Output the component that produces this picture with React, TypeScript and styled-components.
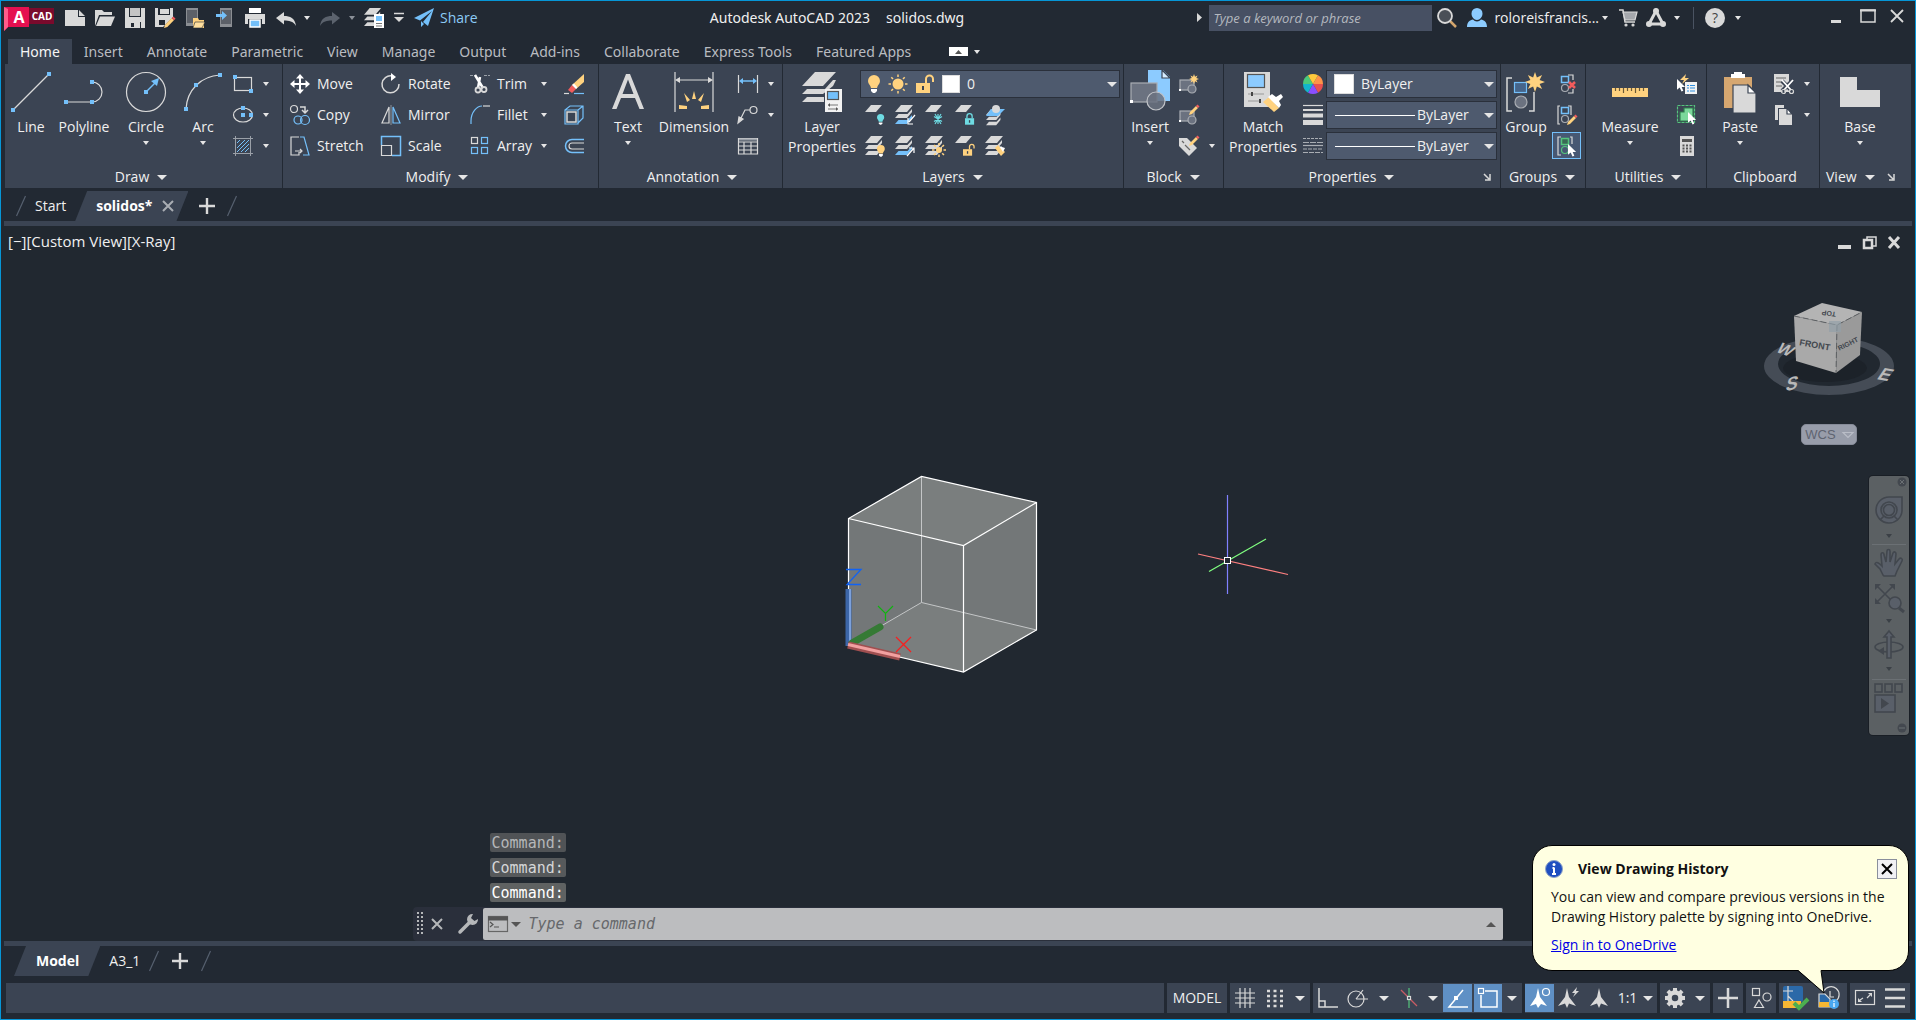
import React from 'react';
import styled, { createGlobalStyle, css } from 'styled-components';

const W = '#d9d9d9';
const B = '#74c0fa';
const Y = '#ffd27f';
const T = '#6edbe3';
const G = '#55c47c';
const R = '#f25c5c';
const PANEL = '#3b4453';
const CHROME = '#222933';

const Global = createGlobalStyle`
  * { box-sizing: border-box; }
  body { margin: 0; background: ${CHROME}; }
  button, input, select { font: inherit; color: inherit; }
`;

const Window = styled.div`
  position: relative;
  display: flex;
  flex-direction: column;
  min-height: 100vh;
  padding-bottom: 6px;
  border: 1px solid #0696d7;
  background: ${CHROME};
  color: #f0f0f0;
  font: 14px/20px 'Open Sans', 'Noto Sans', sans-serif;
  overflow: hidden;
`;

const Btn = styled.button<{ w?: number; h?: number; on?: boolean }>`
  display: flex;
  align-items: center;
  justify-content: center;
  flex: none;
  width: ${(p) => (p.w ? `${p.w}px` : 'auto')};
  height: ${(p) => (p.h ? `${p.h}px` : 'auto')};
  padding: 0;
  border: 0;
  background: ${(p) => (p.on ? '#5f90c5' : 'transparent')};
  cursor: pointer;
`;

const Svg = styled.svg`
  display: block;
  flex: none;
  overflow: visible;
`;

type IcoProps = { w?: number; h?: number; children: React.ReactNode };
const Ico = ({ w = 20, h = 20, children }: IcoProps) => (
  <Svg width={w} height={h} viewBox={`0 0 ${w} ${h}`} fill="none" stroke={W} strokeWidth={1.2} aria-hidden="true">
    {children}
  </Svg>
);

const Caret = ({ big, up, color = '#e6e6e6' }: { big?: boolean; up?: boolean; color?: string }) => {
  const w = big ? 10 : 6;
  const h = big ? 5 : 4;
  return (
    <Svg width={w} height={h} viewBox={`0 0 ${w} ${h}`} aria-hidden="true">
      <path d={up ? `M0 ${h}H${w}L${w / 2} 0Z` : `M0 0H${w}L${w / 2} ${h}Z`} fill={color} />
    </Svg>
  );
};

/* ---------- shared drawing pieces ---------- */

const Dot = ({ x, y }: { x: number; y: number }) => (
  <rect x={x - 2} y={y - 2} width={4} height={4} fill={B} stroke="none" />
);

const Stack = ({ x = 0, y = 0, s = 1, blue }: { x?: number; y?: number; s?: number; blue?: boolean }) => (
  <g transform={`translate(${x} ${y}) scale(${s})`} stroke="none" fill={W}>
    <path d="M6 0H18L12 7H0Z" />
    <path d="M2 9H12.5L17 4V7L12 13H0L3.500 9Z" />
    <path d="M2 15H12.5L17 10V13L12 19H0L3.500 15Z" fill={blue ? B : W} />
  </g>
);

const Sheet = () => <path d="M6 0H17L11 7H0Z" fill={W} stroke="none" />;

const Bulb = ({ x, y, s = 1, c = Y }: { x: number; y: number; s?: number; c?: string }) => (
  <g transform={`translate(${x} ${y}) scale(${s})`} stroke="none">
    <path d="M6 0a6 6 0 0 1 6 6c0 3-2.500 4-3 7H3C2.500 10 0 9 0 6a6 6 0 0 1 6-6Z" fill={c} />
    <path d="M3 14h6v2l-2 2H5l-2-2Z" fill="#fff" />
  </g>
);

const Sun = ({ x, y, r = 5 }: { x: number; y: number; r?: number }) => (
  <g stroke={Y} strokeWidth={1.5}>
    <circle cx={x} cy={y} r={r} fill={Y} stroke="none" />
    {[0, 45, 90, 135, 180, 225, 270, 315].map((a) => (
      <line key={a} x1={x} y1={y - r - 1.5} x2={x} y2={y - r - 4} transform={`rotate(${a} ${x} ${y})`} />
    ))}
  </g>
);

const Lock = ({ x, y, s = 1, c = Y, open }: { x: number; y: number; s?: number; c?: string; open?: boolean }) => (
  <g transform={`translate(${x} ${y}) scale(${s})`}>
    <rect x={0} y={8} width={14} height={10} fill={c} stroke="none" />
    <path d={open ? 'M10 8V4a3.500 3.500 0 0 1 7 0v3' : 'M3 8V5a4 4 0 0 1 8 0v3'} stroke={c} strokeWidth={2} />
    <rect x={6} y={11} width={2} height={4} fill={PANEL} stroke="none" />
  </g>
);

const Pencil = ({ x, y, s = 1 }: { x: number; y: number; s?: number }) => (
  <g transform={`translate(${x} ${y}) scale(${s})`} stroke="none">
    <path d="M0 10L1 7L7 1L9 3L3 9Z" fill={Y} />
    <path d="M7 1L8.500 -.5L10.500 1.500L9 3Z" fill={R} />
  </g>
);

const Cursor = ({ x, y, s = 1 }: { x: number; y: number; s?: number }) => (
  <path
    transform={`translate(${x} ${y}) scale(${s})`}
    d="M0 0V12L3 9.500L5 14L7 13L5.200 8.800H9Z"
    fill="#fff"
    stroke="none"
  />
);

const Burst = ({ x, y, r }: { x: number; y: number; r: number }) => {
  const pts = Array.from({ length: 16 }, (_, i) => {
    const q = i % 2 ? r * 0.5 : r;
    const a = (i * Math.PI) / 8;
    return `${(x + q * Math.sin(a)).toFixed(1)},${(y - q * Math.cos(a)).toFixed(1)}`;
  }).join(' ');
  return <polygon points={pts} fill={Y} stroke="none" />;
};

const BlockShape = () => (
  <g fill="#6b7280" stroke="#a9adb3">
    <rect x={1} y={6} width={14} height={10} />
    <circle cx={13} cy={15} r={4} />
    <rect x={0} y={15} width={2} height={2} fill="#fff" stroke="none" />
  </g>
);

const Plus = () => (
  <Ico w={16} h={16}>
    <path d="M8 0V16M0 8H16" strokeWidth={2.4} />
  </Ico>
);

const Slash = () => (
  <Ico w={10} h={20}>
    <path d="M9.500 0L.5 20" stroke="#56606f" />
  </Ico>
);

/* ---------- title bar ---------- */

const TitleBar = styled.header`
  display: flex;
  align-items: center;
  height: 37px;
  padding: 0 4px 4px 3px;
`;
const Spacer = styled.div`
  flex: 1;
`;
const Logo = styled(Btn)`
  margin-right: 6px;
`;
const Share = styled(Btn)`
  gap: 6px;
  margin-left: 5px;
  color: #8ccbf7;
`;
const DocTitle = styled.h1`
  display: flex;
  gap: 16px;
  margin: 0;
  font: 400 14px/20px 'Noto Sans', sans-serif;
`;
const Search = styled.input`
  width: 223px;
  height: 26px;
  margin: 0 5px 0 7px;
  padding: 0 4px;
  border: 0;
  background: #475063;
  font-size: 13px;
  &::placeholder {
    color: #b4b8bf;
    font-style: italic;
    opacity: 1;
  }
`;
const Account = styled(Btn)`
  gap: 7px;
  margin: 0 5px 0 10px;
`;
const Rule = styled.span`
  width: 1px;
  height: 22px;
  margin: 0 11px 0 8px;
  background: #4a5362;
`;

const quick: [string, React.ReactNode][] = [
  ['New', <path key="a" d="M0 2H13V9H20V18H0ZM14 2L20 8H14Z" fill={W} stroke="none" />],
  [
    'Open',
    <g key="a" stroke="none" fill={W}>
      <path d="M0 18V2H7L9 4H17V7H4Z" />
      <path d="M5 8.500H20L16 18H1Z" />
    </g>,
  ],
  [
    'Save',
    <g key="a" stroke="none" fill={W}>
      <path d="M0 0H4V9H16V0H20V20H16V14H5V20H0Z" />
      <rect x={5} y={0} width={10} height={8} fill="#c4c4c4" />
      <rect x={5} y={14} width={10} height={6} />
      <rect x={6} y={15} width={3} height={4} fill={CHROME} />
    </g>,
  ],
  [
    'Save As',
    <g key="a" stroke="none" fill={W}>
      <path d="M0 0H3V7H15V0H18V9L8 19H0Z" />
      <rect x={5} y={1} width={9} height={5} />
      <rect x={4} y={12} width={6} height={5} fill={CHROME} />
      <Pencil x={9} y={9} s={1.1} />
    </g>,
  ],
  [
    'Open from Web',
    <g key="a" stroke="none">
      <path d="M1 0H13V18H1Z" fill="#8b8e93" />
      <rect x={2} y={2} width={10} height={13} fill="#5c6068" />
      <path d="M8 10H13L14 12H19V20H8Z" fill={Y} />
      <path d="M10 14H20L17 20H8Z" fill="#ffdf9f" stroke={CHROME} strokeWidth={0.6} />
    </g>,
  ],
  [
    'Save to Web',
    <g key="a" stroke="none">
      <path d="M5 0H17V19H5Z" fill="#8b8e93" />
      <rect x={6} y={2} width={10} height={14} fill="#5c6068" />
      <path d="M1 6H7V3L12 7.500L7 12V9H1Z" fill={B} />
    </g>,
  ],
  [
    'Plot',
    <g key="a" stroke="none" fill={W}>
      <rect x={4} y={0} width={12} height={5} fill="#fff" />
      <path d="M0 6H20V16H17V11H3V16H0Z" />
      <path d="M5 12H15V19H5Z" fill={B} stroke="#fff" strokeWidth={1.5} />
    </g>,
  ],
];

const Tabs = styled.nav`
  display: flex;
  align-items: flex-end;
  height: 26px;
  padding-left: 7px;
  font-family: 'Noto Sans', sans-serif;
`;
const Tab = styled.button<{ active?: boolean }>`
  height: 25px;
  padding: 0 12px;
  border: 0;
  background: ${(p) => (p.active ? PANEL : 'transparent')};
  color: ${(p) => (p.active ? '#f5f5f5' : '#b9bcc1')};
`;
const TabTools = styled(Btn)`
  gap: 6px;
  margin-left: 26px;
`;

const Title = () => (
  <TitleBar>
    <Logo aria-label="AutoCAD">
      <Svg width={50} height={26} viewBox="0 0 50 26">
        <path d="M24 3H50V19H24Z" fill="#7a0a2c" />
        <path d="M0 2H25V22H4L0 26Z" fill="#e51050" />
        <path d="M0 2L4 4V22L0 26Z" fill="#ff5c8a" />
        <text x={15} y={18} fontSize={16} fontWeight={700} fill="#fff" textAnchor="middle">A</text>
        <text x={38} y={15} fontSize={10} fontWeight={700} fill="#fff" textAnchor="middle">CAD</text>
      </Svg>
    </Logo>
    {quick.map(([name, art]) => (
      <Btn key={name} w={30} h={26} aria-label={name}><Ico>{art}</Ico></Btn>
    ))}
    <Btn w={31} h={26} aria-label="Undo">
      <Ico><path d="M0 10L8 4V8C14 8 19 10 20 18C17 13 13 12.500 8 12.500V16.500Z" fill={W} stroke="none" /></Ico>
    </Btn>
    <Btn w={12} h={26} aria-label="Undo list"><Caret /></Btn>
    <Btn w={33} h={26} aria-label="Redo">
      <Ico><path d="M20 10L12 4V8C6 8 1 10 0 18C3 13 7 12.500 12 12.500V16.500Z" fill="#5b626d" stroke="none" /></Ico>
    </Btn>
    <Btn w={12} h={26} aria-label="Redo list"><Caret color="#8b9098" /></Btn>
    <Btn w={31} h={26} aria-label="Layer properties">
      <Ico>
        <Stack s={0.95} />
        <rect x={10} y={6} width={10} height={14} fill="#fff" stroke="none" />
        <rect x={12} y={8} width={6} height={5} fill={B} stroke="none" />
        <path d="M12 15.500H18M12 18H18" stroke="#777" />
      </Ico>
    </Btn>
    <Btn w={20} h={26} aria-label="Customize">
      <Ico w={10} h={10}><path d="M0 .5H10" strokeWidth={1.500} /><path d="M0 4H10L5 9Z" fill={W} stroke="none" /></Ico>
    </Btn>
    <Share>
      <Ico><path d="M0 10L20 0L14 18L9 14L18 3L6 12.500ZM7 13L10 16L7 19Z" fill={B} stroke="none" /></Ico>
      Share
    </Share>
    <Spacer />
    <DocTitle><span>Autodesk AutoCAD 2023</span><span>solidos.dwg</span></DocTitle>
    <Spacer />
    <Btn w={6} h={26} aria-label="Collapse search">
      <Ico w={5} h={9}><path d="M0 0L5 4.500L0 9Z" fill={W} stroke="none" /></Ico>
    </Btn>
    <Search aria-label="Search" placeholder="Type a keyword or phrase" />
    <Btn aria-label="Find">
      <Ico><path d="M13 13L19 19" stroke="#d3a56d" strokeWidth={2.500} /><circle cx={8} cy={8} r={7} fill="#4a4f57" strokeWidth={1.8} /></Ico>
    </Btn>
    <Account>
      <Ico>
        <path d="M10 0a5.500 5.500 0 0 1 5.500 5.500C15.500 9 13 12 10 12S4.500 9 4.500 5.500A5.500 5.500 0 0 1 10 0ZM0 19C0 14 3 12 6 11.500C8 14 12 14 14 11.500C17 12 20 14 20 19Z" fill="#8ccbff" stroke="none" />
      </Ico>
      <AccountName>roloreisfrancis...<Caret /></AccountName>
    </Account>
    <Btn w={30} h={26} aria-label="App store">
      <Ico w={18}>
        <path d="M0 2H4L6 14H16" strokeWidth={1.500} />
        <path d="M4 4H18L16 12H6Z" fill="#a5a8ad" />
        <circle cx={7} cy={17} r={1} fill={W} /><circle cx={14} cy={17} r={1} fill={W} />
      </Ico>
    </Btn>
    <Btn w={26} h={26} aria-label="Autodesk account">
      <Ico><path d="M10 3L3 16H17Z" strokeWidth={3} /><g fill={W} stroke="none"><circle cx={10} cy={3} r={3} /><circle cx={3} cy={16} r={3} /><circle cx={17} cy={16} r={3} /></g></Ico>
    </Btn>
    <Btn w={16} h={26} aria-label="Account menu"><Caret /></Btn>
    <Rule />
    <Btn aria-label="Help">
      <Ico><circle cx={10} cy={10} r={10} fill={W} stroke="none" /><text x={10} y={15} fontSize={14} textAnchor="middle" fill="#444" stroke="none">?</text></Ico>
    </Btn>
    <Btn w={26} h={26} aria-label="Help menu"><Caret /></Btn>
    <Btn w={160} h={26} aria-label="Window controls">
      <Ico w={160} h={26}>
        <path d="M80 16.500H90" strokeWidth={3} />
        <rect x={110} y={5} width={14} height={12} strokeWidth={1.500} /><path d="M109 5.500H125" strokeWidth={2} />
        <path d="M140 5L152 17M152 5L140 17" strokeWidth={1.800} />
      </Ico>
    </Btn>
  </TitleBar>
);
const AccountName = styled.span`
  display: flex;
  align-items: center;
  gap: 3px;
`;

const tabNames = ['Home', 'Insert', 'Annotate', 'Parametric', 'View', 'Manage', 'Output', 'Add-ins', 'Collaborate', 'Express Tools', 'Featured Apps'];

/* ---------- ribbon ---------- */

const Ribbon = styled.section`
  display: flex;
  margin: 0 4px;
  background: ${PANEL};
`;
const PanelBox = styled.section<{ last?: boolean; pl: number; pr: number }>`
  display: flex;
  flex-direction: column;
  flex: ${(p) => (p.last ? '1' : 'none')};
  padding: 6px ${(p) => p.pr}px 0 ${(p) => p.pl}px;
  border-right: ${(p) => (p.last ? '0' : `1px solid ${CHROME}`)};
`;
const PanelBody = styled.div`
  display: flex;
  height: 89px;
`;
const PanelFoot = styled.footer`
  display: flex;
  align-items: center;
  height: 29px;
  padding-top: 7px;
`;
const PanelTitle = styled(Btn)<{ start?: boolean }>`
  flex: ${(p) => (p.start ? 'none' : '1')};
  gap: 8px;
  height: 22px;
  padding: 0 ${(p) => (p.start ? '6px' : '0')};
`;
const Col = styled.div<{ w?: number; gap?: number }>`
  display: grid;
  grid-template-rows: repeat(3, 27px);
  row-gap: 4px;
  align-content: start;
  flex: none;
  width: ${(p) => (p.w ? `${p.w}px` : 'auto')};
  margin-left: ${(p) => p.gap || 0}px;
`;
const Row = styled.div`
  display: flex;
  align-items: center;
`;
const Big = styled(Btn)`
  flex-direction: column;
  justify-content: flex-start;
  padding-top: 2px;
  span { margin-top: 5px; }
  span + svg { margin-top: 4px; }
`;
const Tool = styled(Btn)`
  gap: 7px;
  height: 27px;
  padding-left: 3px;
`;
const ToolCaret = styled(Btn)`
  margin: 0 9px 0 auto;
`;
const Framed = styled(Btn)`
  border: 1px solid #74c0fa;
  background: #475873;
`;

type PanelProps = { name: string; pl: number; pr: number; last?: boolean; caret?: boolean; launch?: boolean; children: React.ReactNode };
const Launch = () => (
  <Btn w={20} h={22} aria-label="Open palette">
    <Ico w={6} h={6}><path d="M0 0L5 5M6 0V6H1" strokeWidth={1.500} /></Ico>
  </Btn>
);
const Panel = ({ name, pl, pr, last, caret = true, launch, children }: PanelProps) => (
  <PanelBox pl={pl} pr={pr} last={last}>
    <PanelBody>{children}</PanelBody>
    <PanelFoot>
      <PanelTitle start={last}>{name}{caret && <Caret big />}</PanelTitle>
      {launch && <Launch />}
    </PanelFoot>
  </PanelBox>
);

type BigProps = { w: number; label: React.ReactNode; caret?: boolean; children: React.ReactNode };
const BigButton = ({ w, label, caret, children }: BigProps) => (
  <Big w={w}>
    <Ico w={40} h={40}>{children}</Ico>
    <span>{label}</span>
    {caret && <Caret />}
  </Big>
);

const Small = ({ name, w = 30, caret, children }: { name: string; w?: number; caret?: number; children: React.ReactNode }) => (
  <Row>
    <Btn w={w} h={27} aria-label={name}><Ico>{children}</Ico></Btn>
    {caret && <Btn w={caret} h={27} aria-label={`${name} menu`}><Caret /></Btn>}
  </Row>
);

const Labeled = ({ name, caret, children }: { name: string; caret?: boolean; children: React.ReactNode }) => (
  <Row>
    <Tool><Ico>{children}</Ico>{name}</Tool>
    {caret && <ToolCaret w={16} h={27} aria-label={`${name} menu`}><Caret /></ToolCaret>}
  </Row>
);

const Combo = styled.div<{ w: number }>`
  display: flex;
  align-items: center;
  gap: 7px;
  width: ${(p) => p.w}px;
  height: 28px;
  padding: 0 2px 0 6px;
  border: 1px solid #2a303b;
  background: #4e5a6e;
`;
const Select = styled.select`
  flex: 1;
  min-width: 0;
  height: 24px;
  padding: 0;
  border: 0;
  appearance: none;
  background: transparent;
  option { background: #4e5a6e; }
`;
const Swatch = styled.span<{ s: number }>`
  flex: none;
  width: ${(p) => p.s}px;
  height: ${(p) => p.s}px;
  margin-left: 1px;
  border: 1px solid #ddd;
  background: #fff;
`;
const LineSample = styled.span`
  flex: none;
  width: 80px;
  height: 1px;
  margin: 0 -5px 0 2px;
  background: #fff;
`;

const DrawPanel = () => (
  <Panel name="Draw" pl={3} pr={8}>
    <BigButton w={46} label="Line"><path d="M3 37L37 3" /><Dot x={2} y={38} /><Dot x={38} y={2} /></BigButton>
    <BigButton w={60} label="Polyline"><path d="M2 30H28A10 10 0 0 0 28 10" /><Dot x={2} y={30} /><Dot x={28} y={30} /><Dot x={28} y={10} /></BigButton>
    <BigButton w={64} label="Circle" caret>
      <circle cx={20} cy={20} r={19.500} /><path d="M20 20L29 11" stroke={B} strokeWidth={1.500} /><path d="M33 6L31 14L25 9Z" fill={B} stroke="none" /><Dot x={20} y={20} />
    </BigButton>
    <BigButton w={50} label="Arc" caret><path d="M3 37C4 18 18 4 37 3" /><Dot x={3} y={37} /><Dot x={13} y={13} /><Dot x={37} y={3} /></BigButton>
    <Col>
      <Small name="Rectangle" caret={16}><rect x={1.500} y={3.500} width={17} height={13} /><Dot x={2} y={3} /><Dot x={18} y={17} /></Small>
      <Small name="Ellipse" caret={16}><ellipse cx={10} cy={10} rx={9.500} ry={7} /><Dot x={10} y={10} /><Dot x={10} y={3} /><Dot x={18} y={10} /></Small>
      <Small name="Hatch" caret={16}>
        <path d="M4 7L7 4M4 12L12 4M4 16L16 4M8 16L16 8M12 16L16 12" stroke={B} strokeWidth={1} /><path d="M2.500 0V20M17.500 0V20M0 2.500H20M0 17.500H20" stroke="#9aa0a8" strokeWidth={1} />
      </Small>
    </Col>
  </Panel>
);

const ModifyPanel = () => (
  <Panel name="Modify" pl={4} pr={11}>
    <Col w={91}>
      <Labeled name="Move"><path d="M10 2V18M2 10H18" strokeWidth={2} stroke="#fff" /><path d="M10 0L14 4.500H6ZM10 20L6 15.500H14ZM0 10L4.500 6V14ZM20 10L15.500 14V6Z" fill="#fff" stroke="none" /></Labeled>
      <Labeled name="Copy"><circle cx={4} cy={4} r={3.500} /><path d="M10 2H15V7M12 5L15 8L18 5" strokeWidth={1.500} /><g stroke={B}><circle cx={8} cy={15} r={4} /><circle cx={15} cy={15} r={4.500} /></g></Labeled>
      <Labeled name="Stretch"><path d="M9 1H1V19H9V16M5 15H12M10 13L12 15L10 17" /><path d="M10 1H14L19 19H13" stroke={B} /></Labeled>
    </Col>
    <Col w={89}>
      <Labeled name="Rotate"><path d="M11 2A8.500 8.500 0 1 0 18 10" strokeWidth={1.500} /><path d="M10 -1L15 3L10 7Z" fill="#fff" stroke="none" /></Labeled>
      <Labeled name="Mirror"><path d="M8 2V18H1Z" /><path d="M12 2V18H19Z" stroke={B} /><path d="M10 0V20" stroke="#8f949b" strokeWidth={1} /></Labeled>
      <Labeled name="Scale"><path d="M.5 9V.5H19.500V19.500H11" stroke={B} strokeWidth={1.500} /><path d="M.5 9.500H10.500V19.500H.5Z" /></Labeled>
    </Col>
    <Col w={94}>
      <Labeled name="Trim" caret>
        <path d="M0 1.500H6M14 1.500H20" strokeDasharray="3 1" stroke="#9aa0a8" /><path d="M5 1L13 14M10 3L8 14" stroke="#fff" strokeWidth={2.500} /><circle cx={8} cy={16} r={2.500} strokeWidth={1.800} /><circle cx={14} cy={15.500} r={2.500} strokeWidth={1.800} />
      </Labeled>
      <Labeled name="Fillet" caret><path d="M1 19V16C1 7 7 1 12 1" stroke={B} /><path d="M13 1H20" /></Labeled>
      <Labeled name="Array" caret><rect x={1.500} y={1.500} width={6} height={6} /><g stroke={B}><rect x={11.500} y={1.500} width={6} height={6} /><rect x={1.500} y={11.500} width={6} height={6} /><rect x={11.500} y={11.500} width={6} height={6} /></g></Labeled>
    </Col>
    <Col w={26}>
      <Small name="Erase" w={26}><path d="M8 11L20 0V8L12 15Z" fill={Y} stroke="none" /><path d="M4 16L8 11L12 15L8 19Z" fill={R} stroke="none" /><path d="M8 11L10 9.500L13.500 13.500L12 15Z" fill="#fff" stroke="none" /><path d="M0 19.500H5" /><path d="M10 19.500H20" stroke={B} /></Small>
      <Small name="Explode" w={26}><path d="M3 7H12V17H3Z" strokeWidth={1.500} /><path d="M1 5L6 1H19V13L14 18M14 5L19 1M1 5H14V19H1Z" stroke={B} /></Small>
      <Small name="Offset" w={26}><path d="M20 3.500H8A6.500 6.500 0 0 0 8 16.500H20" stroke={B} strokeWidth={1.500} /><path d="M20 7H8A3 3 0 0 0 8 13H20" /></Small>
    </Col>
  </Panel>
);

const AnnotationPanel = () => (
  <Panel name="Annotation" pl={4} pr={1}>
    <BigButton w={50} label="Text" caret><path d="M4 37L18 2H22L36 37H31.500L27 26H13L8.500 37ZM14.500 22H25.500L20 7.500Z" fill={W} stroke="none" /></BigButton>
    <BigButton w={82} label="Dimension">
      <path d="M1 0V40M39 0V40M4 8H36" /><path d="M1 8L6 5V11ZM39 8L34 5V11Z" fill={W} stroke="none" />
      <path d="M20 19L22 27H18ZM10 21L16 28L13 30ZM30 21L24 28L27 30ZM5 33L13 34V37H5ZM35 33L27 34V37H35Z" fill={Y} stroke="none" />
    </BigButton>
    <Col>
      <Small name="Linear" w={26} caret={20}><path d="M.5 1V19M19.500 1V19" /><path d="M3 7H17" stroke={B} strokeWidth={1.500} /><path d="M1 7L5 4V10ZM19 7L15 4V10Z" fill={B} stroke="none" /></Small>
      <Small name="Leader" w={26} caret={20}><path d="M2 15L7 5H12" /><circle cx={15.500} cy={5} r={3.500} /><path d="M0 18L1 12L5 14Z" fill={W} /></Small>
      <Small name="Table" w={26}><path d="M.5 2.500H19.500V18H.5ZM.5 6H19.500M.5 10H19.500M.5 14H19.500M6 6V18M13 6V18" /><path d="M1 3.500H19" stroke="#9aa0a8" strokeWidth={2} /></Small>
    </Col>
  </Panel>
);

const LayersPanel = () => (
  <Panel name="Layers" pl={2} pr={3}>
    <BigButton w={74} label={<>Layer<br />Properties</>}>
      <path d="M13 0H34L21 14H0ZM7 17H23L31 8H34L31 14L21 22H0L5 17ZM7 25H22V30H0L5 25Z" fill={W} stroke="none" />
      <rect x={23} y={17} width={17} height={23} fill="#f2f2f2" stroke="none" /><rect x={25.500} y={19.500} width={11} height={8} fill={B} stroke="#555" /><path d="M26 33H36M26 37H36" stroke="#777" /><path d="M26 33L28 31V35ZM36 37L34 35V39Z" fill="#555" stroke="none" />
    </BigButton>
    <Col gap={1}>
      <Combo w={260}>
        <Ico w={14}><Bulb x={1} y={1} /></Ico>
        <Ico w={20}><Sun x={10} y={10} r={5.500} /></Ico>
        <Ico w={19}><Lock x={1} y={1} open /></Ico>
        <Swatch s={18} />
        <Select aria-label="Layer" defaultValue="0"><option>0</option></Select>
        <Caret big />
      </Combo>
      <Row>
        <Small name="Off"><Sheet /><Bulb x={12} y={9} s={0.6} c={T} /></Small>
        <Small name="Make current"><Stack blue /><path d="M20 10L14 17M13 13V19H18" stroke="#fff" /></Small>
        <Small name="Freeze"><Sheet /><path d="M13 9V19M9 11.500L17 16.500M17 11.500L9 16.500M10 9L16 19M16 9L10 19" stroke={T} /></Small>
        <Small name="Lock"><Sheet /><Lock x={10} y={8} s={0.65} c={T} /></Small>
        <Small name="Match layer"><Stack x={1} y={4} s={0.85} /><path d="M6 4H20L13 11H1Z" fill={B} stroke="none" /><circle cx={11} cy={4} r={4} fill={W} stroke="none" /></Small>
      </Row>
      <Row>
        <Small name="Turn all on"><Stack /><Bulb x={12} y={9} s={0.65} /></Small>
        <Small name="Previous"><Stack blue /><path d="M12 20L19 12M14 12H19V17" stroke="#fff" /></Small>
        <Small name="Thaw"><Stack /><Sun x={14} y={14} r={3} /></Small>
        <Small name="Unlock"><Sheet /><Lock x={8} y={8} s={0.65} open /></Small>
        <Small name="Change to current"><Stack /><path d="M10 12L13 9L20 16L16 20Z" fill={Y} stroke="none" /><path d="M14 10L20 12L18 16Z" fill="#fff" stroke="none" /></Small>
      </Row>
    </Col>
  </Panel>
);

const BlockPanel = () => (
  <Panel name="Block" pl={2} pr={3}>
    <BigButton w={48} label="Insert" caret>
      <path d="M18 -2H33L40 5V29H18Z" fill="#8ccbff" stroke="none" /><path d="M32 -2L40 6H32Z" fill="#d5ecff" stroke={PANEL} />
      <rect x={1} y={11} width={26} height={19} fill="#6b7280" stroke="#a9adb3" /><circle cx={26} cy={29} r={9} fill="#6b7280" stroke="#c0c3c8" fillOpacity={0.85} /><rect x={0} y={28} width={3} height={3} fill="#fff" stroke="none" />
    </BigButton>
    <Col>
      <Small name="Create block"><BlockShape /><Burst x={15} y={5} r={5} /></Small>
      <Small name="Edit block"><BlockShape /><Pencil x={10} y={0} /></Small>
      <Small name="Edit attributes" caret={16}><path d="M0 2H8L18 12L10 20L0 10Z" fill={W} stroke="none" /><path d="M3 5L5 7M6 9L11 14" stroke="#666" /><Pencil x={10} y={0} /></Small>
    </Col>
  </Panel>
);

const wedges = ['#ff9248', '#e8504f', '#8a4fff', '#12b5cb', '#4bc97a', '#ffc93c'];
const PropertiesPanel = () => (
  <Panel name="Properties" pl={2} pr={3} launch>
    <BigButton w={74} label={<>Match<br />Properties</>}>
      <rect x={1} y={0} width={26} height={35} fill={W} stroke="none" /><rect x={4.500} y={2.500} width={17} height={13} fill="#8ccbff" stroke="#555" /><path d="M5 22H21M5 29H18" stroke="#999" /><path d="M9 20V24M17 27V31" stroke="#444" strokeWidth={2} />
      <path d="M20 30L26 25L36 36L31 40Z" fill={Y} stroke="none" /><path d="M25 25L29 22L33 25L38 22L40 25L36 29L38 33L36 36Z" fill="#fff" stroke="none" />
    </BigButton>
    <Col w={26}>
      <Small name="Object color" w={26}>
        {wedges.map((c, i) => <path key={c} d="M10 10V0A10 10 0 0 1 18.660 5Z" transform={`rotate(${i * 60 + 30} 10 10)`} fill={c} stroke="none" />)}
      </Small>
      <Small name="Lineweight" w={26}><path d="M0 .5H20" /><path d="M0 5H20" strokeWidth={2} /><path d="M0 10.500H20" strokeWidth={4} /><path d="M0 17.500H20" strokeWidth={5} /></Small>
      <Small name="Linetype" w={26}><g stroke="#a9adb3"><path d="M0 2.500H20" strokeDasharray="3 1" /><path d="M0 6.500H20" strokeDasharray="6 1" /><path d="M0 9.500H20" /><path d="M0 13H20" strokeDasharray="4 1" /><path d="M0 16.500H20" strokeDasharray="5 1" /></g></Small>
    </Col>
    <Col>
      <Combo w={171}><Swatch s={20} /><Select aria-label="Color"><option>ByLayer</option></Select><Caret big /></Combo>
      <Combo w={171}><LineSample /><Select aria-label="Lineweight"><option>ByLayer</option></Select><Caret big /></Combo>
      <Combo w={171}><LineSample /><Select aria-label="Linetype"><option>ByLayer</option></Select><Caret big /></Combo>
    </Col>
  </Panel>
);

const GroupShape = ({ c, f }: { c: string; f?: string }) => (
  <><rect x={4.500} y={2.500} width={7} height={6} stroke={c} fill={f || 'none'} strokeWidth={1.500} /><circle cx={8} cy={14} r={3.500} stroke={c === G ? G : '#a9adb3'} /></>
);

const GroupsPanel = () => (
  <Panel name="Groups" pl={2} pr={4}>
    <BigButton w={46} label="Group">
      <path d="M6 6H1V39H6M23 39H28V20" strokeWidth={1.500} /><rect x={8.500} y={10.500} width={12} height={10} stroke={B} fill="#46658a" /><circle cx={15} cy={30} r={6} fill="#6b7280" stroke="#a9adb3" /><Burst x={29} y={10} r={10} />
    </BigButton>
    <Col gap={3}>
      <Small name="Ungroup" w={29}><GroupShape c={B} /><path d="M11 1H16V6M16 15V19H11" /><path d="M12 8L18 14M18 8L12 14" stroke={R} strokeWidth={2.500} /></Small>
      <Small name="Group edit" w={29}><path d="M3 1H1V19H3M11 1H14V10" /><GroupShape c={B} /><Pencil x={10} y={10} /></Small>
      <Framed w={29} h={27} aria-label="Group selection"><Ico><path d="M4 1H1V19H4M13 1H15V8" /><GroupShape c={G} f="#3a6b55" /><Cursor x={11} y={8} s={0.9} /></Ico></Framed>
    </Col>
  </Panel>
);

const UtilitiesPanel = () => (
  <Panel name="Utilities" pl={8} pr={4}>
    <BigButton w={72} label="Measure" caret>
      <rect x={2} y={16} width={36} height={9} fill={Y} stroke="none" />
      <path d="M5.500 16V19M9.500 16V19M13.500 16V21M17.500 16V19M21.500 16V19M25.500 16V21M29.500 16V19M33.500 16V19" stroke="#6b5a36" />
    </BigButton>
    <Col gap={6}>
      <Small name="Quick select"><path d="M9 0L3 6H7L5 10L12 4H8Z" fill={Y} stroke="none" /><rect x={8} y={8} width={12} height={12} fill="#f2f2f2" stroke="none" /><path d="M10 11.500H12M10 14H12M10 17H12M13 11.500H18M13 14H18M13 17H18" stroke="#2f8fe0" /><Cursor x={0} y={5} s={0.9} /></Small>
      <Small name="Select all"><rect x={0.500} y={0.500} width={17} height={17} stroke={G} strokeDasharray="3 1" /><path d="M3 7H7V3H16V12H12V16H3Z" fill="#7bd79b" stroke="#2e7d4d" /><Cursor x={11} y={7} s={0.900} /></Small>
      <Small name="Calculator"><rect x={3} y={0} width={14} height={20} fill={W} stroke="none" /><rect x={5} y={3} width={10} height={3} fill="#555" stroke="none" /><path d="M5.500 9.500H15M5.500 12.500H15M5.500 15.500H15" strokeDasharray="2 1.500" stroke="#555" strokeWidth={2} /></Small>
    </Col>
  </Panel>
);

const ClipboardPanel = () => (
  <Panel name="Clipboard" pl={8} pr={4} caret={false}>
    <BigButton w={50} label="Paste" caret>
      <path d="M4 5H32V20H14V36H4Z" fill="#d6a770" stroke="none" /><path d="M11 2H14V0H22V2H25V6H11Z" fill="#fff" stroke="none" /><path d="M13 13H28L36 21V41H13Z" fill={W} stroke={PANEL} /><path d="M28 13V21H36Z" fill="#fff" stroke={PANEL} />
    </BigButton>
    <Col gap={4}>
      <Small name="Cut" caret={16}><path d="M0 0H15V18H0Z" fill={W} stroke="none" /><path d="M2 4H12M2 8H9M2 12H8" stroke="#666" /><path d="M8 7L18 17M18 7L8 17" stroke={PANEL} strokeWidth={4} /><path d="M8 6L17 16M19 6L10 16" stroke="#fff" strokeWidth={1.800} /><circle cx={9.500} cy={17.500} r={2} /><circle cx={17.500} cy={17.500} r={2} /></Small>
      <Small name="Copy clip" caret={16}><path d="M1 0H10V3H4V15H1Z" fill={W} stroke="none" /><path d="M5 4H13L18 9V20H5Z" fill={W} stroke="none" /><path d="M13 3V9H18Z" fill="#fff" stroke={PANEL} /></Small>
    </Col>
  </Panel>
);

const ViewPanel = () => (
  <Panel name="View" pl={0} pr={0} last launch>
    <BigButton w={80} label="Base" caret><path d="M0 5H17V18H40V35H0Z" fill={W} stroke="none" /></BigButton>
  </Panel>
);

/* ---------- document tabs ---------- */

const DocTabs = styled.nav`
  display: flex;
  align-items: center;
  height: 33px;
  padding: 3px 0 0 15px;
`;
const PlainTab = styled.button`
  padding: 0 9px;
  border: 0;
  background: transparent;
`;
const slanted = css`
  height: 30px;
  border: 0;
  background: ${PANEL};
  color: #fff;
  font-weight: 700;
  clip-path: polygon(12px 0, 100% 0, calc(100% - 12px) 100%, 0 100%);
`;
const ActiveDoc = styled.div`
  ${slanted}
  display: flex;
  align-items: center;
  gap: 11px;
  padding: 0 15px 0 21px;
`;
const AddTab = styled(Btn)`
  margin: 0 12px 0 11px;
`;
const Strip = styled.div`
  height: 5px;
  margin: 0 3px;
  background: ${PANEL};
`;

/* ---------- drawing area ---------- */

const Viewport = styled.main`
  position: relative;
  display: flex;
  flex-direction: column;
  justify-content: space-between;
  flex: 1;
  min-height: 600px;
  background: #212830;
`;
const Scene = styled.svg`
  position: absolute;
  inset: 0;
  width: 100%;
  height: 100%;
`;
const ViewHead = styled.div`
  position: relative;
  display: flex;
  align-items: flex-start;
  justify-content: space-between;
  padding: 5px 13px 0 7px;
`;
const ViewLabel = styled.div`
  display: flex;
  font-size: 15px;
`;
const CubeWrap = styled.div`
  position: absolute;
  top: 76px;
  right: 20px;
  display: flex;
  flex-direction: column;
  align-items: center;
  gap: 26px;
`;
const Wcs = styled(Btn)`
  gap: 7px;
  border-radius: 5px;
  background: #989daa;
  border: 1px solid #868b98;
  color: #5f6471;
  font: 13px/18px 'Liberation Sans', sans-serif;
`;
const NavBar = styled.aside`
  position: absolute;
  top: 250px;
  right: 6px;
  display: flex;
  flex-direction: column;
  align-items: center;
  width: 40px;
  border-radius: 4px;
  background: #5b6063;
  box-shadow: 0 0 0 1px #191e25;
`;
const NavEdge = styled(Btn)`
  align-self: flex-end;
  margin: 1px 2px;
`;
const NavRule = styled.span`
  width: 34px;
  height: 1px;
  margin-top: 4px;
  background: #6b7074;
`;
const Dock = styled.section`
  position: relative;
  width: 57%;
  min-width: 600px;
  margin: 0 auto;
`;
const History = styled.ol`
  display: flex;
  flex-direction: column;
  align-items: flex-start;
  gap: 6px;
  margin: 0 0 5px 77px;
  padding: 0;
  list-style: none;
`;
const HistoryLine = styled.li<{ bg: string; fg: string }>`
  height: 19px;
  padding: 0 2px;
  border-radius: 2px;
  background: ${(p) => p.bg};
  color: ${(p) => p.fg};
  font: 15px/20px 'DejaVu Sans Mono', monospace;
`;
const CommandBar = styled.div`
  display: flex;
  height: 34px;
  padding: 1px 0;
  border-radius: 4px 0 0 4px;
  background: #2a2f3b;
`;
const CommandTools = styled.div`
  display: flex;
  align-items: center;
  gap: 8px;
  width: 70px;
  padding: 0 5px 0 4px;
`;
const Wrench = styled(Btn)`
  margin-left: auto;
`;
const CommandField = styled.div`
  display: flex;
  align-items: center;
  flex: 1;
  gap: 3px;
  padding: 0 7px 0 5px;
  border-radius: 2px;
  background: #bcbdbf;
`;
const CommandInput = styled.input`
  flex: 1;
  padding: 0 5px;
  border: 0;
  background: transparent;
  color: #333;
  font: 15px/20px 'DejaVu Sans Mono', monospace;
  &::placeholder {
    color: #66686b;
    font-style: italic;
    opacity: 1;
  }
`;

const letter = { fontFamily: 'Liberation Sans', fontWeight: 700 } as const;

const ViewCube = () => (
  <CubeWrap>
    <Svg width={132} height={96} viewBox="0 0 132 96" role="img" aria-label="View cube">
      <path fillRule="evenodd" fill="#454c56" d="M1 64A65 29 0 1 0 131 64A65 29 0 1 0 1 64ZM15 62A51 22 0 1 0 117 62A51 22 0 1 0 15 62Z" />
      <ellipse cx={62} cy={66} rx={42} ry={14} fill="#171c22" opacity={0.5} />
      <g fill="#b9b9b9" {...letter} textAnchor="middle">
        <text fontSize={16} transform="translate(19 52) rotate(20) skewX(-20)">W</text>
        <text fontSize={18} transform="translate(28 88) rotate(-12) skewX(-24)">S</text>
        <text fontSize={18} transform="translate(119 78) rotate(10) skewX(-24)">E</text>
      </g>
      <path d="M59 1L99 10L74 23L31 14Z" fill="#b4b4b4" />
      <path d="M31 14L74 23L73 71L33 59Z" fill="#a9a9a9" />
      <path d="M74 23L99 10L97 53L73 71Z" fill="#9a9a9a" />
      <path d="M31 14L74 23L99 10M74 23L73 71" fill="none" stroke="#5d6063" strokeDasharray="6 3" />
      <rect x={66} y={19} width={12} height={11} fill="#93a0a8" opacity={0.7} />
      <g fill="#43484f" {...letter} textAnchor="middle">
        <text x={52} y={46} fontSize={9} transform="rotate(10 52 42)">FRONT</text>
        <text fontSize={7} transform="translate(86 44) rotate(-26)">RIGHT</text>
        <text x={66} y={13} fontSize={7} transform="rotate(188 66 11)">TOP</text>
      </g>
    </Svg>
    <Wcs w={56} h={21}>WCS<Ico w={10} h={6}><path d="M0 .5H10L5 5.500Z" stroke="#b9bdc7" /></Ico></Wcs>
  </CubeWrap>
);

const NavIcon = ({ name, h, children }: { name: string; h: number; children: React.ReactNode }) => (
  <Btn w={40} h={h} aria-label={name}>
    <Svg width={28} height={28} viewBox="0 0 28 28" fill="none" stroke="#42474e" strokeWidth={1.600}>{children}</Svg>
  </Btn>
);

const Navigation = () => (
  <NavBar>
    <NavEdge aria-label="Close navigation bar"><Svg width={10} height={10} viewBox="0 0 10 10"><circle cx={5} cy={5} r={4.500} fill="#43484f" /><path d="M3 3L7 7M7 3L3 7" stroke="#6b7074" /></Svg></NavEdge>
    <NavIcon name="Steering wheel" h={44}><path d="M14 1H27V15A13 13 0 1 1 14 1Z" fill="#595f69" /><circle cx={14} cy={14} r={8} /><circle cx={14} cy={14} r={5.500} /><path d="M9 20L5 24M19 20L23 24" /></NavIcon>
    <Btn w={40} h={8} aria-label="Wheel menu"><Caret color="#3b4046" /></Btn>
    <NavRule />
    <NavIcon name="Pan" h={36}><path d="M8 26L5 20L0 15C1 12 4 14 7 17L6 6C6 3 9 3 9 6L11 13L12 2C12 0 15 0 15 2V13L18 4C19 2 21 3 21 5L20 15L24 10C26 8 28 10 27 12L22 22L20 27H9Z" fill="#595f69" /></NavIcon>
    <NavIcon name="Zoom" h={34}><path d="M1 1L19 19M19 1L1 19" /><path d="M0 0H6L0 6ZM20 0V6L14 0ZM0 20V14L6 20Z" fill="#42474e" stroke="none" /><circle cx={20} cy={19} r={6} fill="#595f69" /><path d="M24 24L29 28" strokeWidth={3} /></NavIcon>
    <Btn w={40} h={12} aria-label="Zoom menu"><Caret color="#3b4046" /></Btn>
    <NavIcon name="Orbit" h={36}><ellipse cx={14} cy={16} rx={14} ry={5} /><path d="M14 0L19 6H16V27H12V6H9Z" fill="#595f69" /><path d="M3 20L9 16V24Z" fill="#42474e" stroke="none" /></NavIcon>
    <Btn w={40} h={12} aria-label="Orbit menu"><Caret color="#3b4046" /></Btn>
    <NavRule />
    <NavIcon name="Show motion" h={36}><rect x={0} y={0} width={7} height={8} /><rect x={10} y={0} width={7} height={8} /><rect x={20} y={0} width={7} height={8} /><rect x={0} y={11} width={20} height={17} fill="#595f69" /><path d="M6 14L14 19.500L6 25Z" fill="#42474e" stroke="none" /></NavIcon>
    <NavEdge aria-label="Navigation bar options"><Svg width={10} height={17} viewBox="0 -6 10 17"><circle cx={5} cy={5} r={4.500} fill="#43484f" /><path d="M2 5H8" stroke="#6b7074" /></Svg></NavEdge>
  </NavBar>
);

const Drawing = () => (
  <Scene viewBox="1 226 1914 715" role="img" aria-label="Cube solid with axes">
    <path d="M921.500 476.500L1036.500 502.500V630L963.500 672L848.500 645V518.500Z" fill="#737778" />
    <path d="M921.500 476.500L1036.500 502.500L963.500 545.500L848.500 518.500Z" fill="#7a7e7e" />
    <path d="M921.500 602.500L1036.500 630L963.500 672L848.500 645Z" fill="#7a7e7e" />
    <path d="M921.500 476.500V602.500L1036.500 630M921.500 602.500L848.500 645" fill="none" stroke="#c4c6c7" />
    <path d="M848.500 645V518.500L921.500 476.500L1036.500 502.500V630L963.500 672L848.500 645M848.500 518.500L963.500 545.500L1036.500 502.500M963.500 545.500V672" fill="none" stroke="#fff" strokeWidth={1.200} />
    <path d="M848.500 646V589" stroke="#3c66a8" strokeWidth={6} /><path d="M850 646V589" stroke="#7ba0dc" strokeWidth={2} />
    <path d="M852 643L880 627" stroke="#357a35" strokeWidth={7} strokeLinecap="round" />
    <path d="M848 645L900 657" stroke="#a04f50" strokeWidth={7} /><path d="M848 644.500L900 656.500" stroke="#f2a0a0" strokeWidth={3} />
    <path d="M846 569.500H861L847 584.500H861" fill="none" stroke="#0f62f5" strokeWidth={1.300} />
    <path d="M878 606L885.500 613.500L893 606M885.500 613.500V621" fill="none" stroke="#10b410" strokeWidth={1.200} />
    <path d="M896 637L911 652M911 637L896 652" stroke="#fa1e1e" strokeWidth={1.200} />
    <path d="M1227.500 495V594" stroke="#8080ff" strokeWidth={1.200} />
    <path d="M1209 571.500L1266 539" stroke="#80ff80" strokeWidth={1.200} /><path d="M1198 554L1288 574.500" stroke="#ff8080" strokeWidth={1.200} />
    <rect x={1224.500} y={557.500} width={6} height={6} fill="#212830" stroke="#fff" />
  </Scene>
);

/* ---------- bottom bars ---------- */

const LayoutTabs = styled.nav`
  display: flex;
  align-items: center;
  height: 30px;
  margin-bottom: 7px;
  padding-left: 13px;
`;
const ModelTab = styled.button`
  ${slanted}
  padding: 0 21px 0 22px;
`;
const AddLayout = styled(Btn)`
  margin: 0 13px;
`;
const StatusBar = styled.footer`
  display: flex;
  gap: 3px;
  height: 30px;
  margin: 0 5px;
`;
const StatusGroup = styled.div<{ grow?: boolean }>`
  display: flex;
  align-items: center;
  flex: ${(p) => (p.grow ? '1' : 'none')};
  background: ${PANEL};
`;
const Tight = styled.span`
  width: 2px;
`;
const S = ({ name, w, on, iw = 22, children }: { name: string; w: number; on?: boolean; iw?: number; children: React.ReactNode }) => (
  <Btn w={w} h={28} on={on} aria-label={name}><Ico w={iw} h={22}>{children}</Ico></Btn>
);
const C = ({ w, name }: { w: number; name: string }) => <Btn w={w} h={30} aria-label={name}><Caret big /></Btn>;
const ScaleBtn = styled(Btn)`
  gap: 6px;
`;

const gear = Array.from({ length: 8 }, (_, i) => i * 45);
const Needle = () => <path d="M11 1L13 10L20 19L13 16.500L11 21L9 16.500L2 19L9 10Z" fill={W} stroke="none" />;

const Status = () => (
  <StatusBar>
    <StatusGroup grow />
    <StatusGroup><Btn w={60} h={30}>MODEL</Btn></StatusGroup>
    <StatusGroup>
      <S name="Grid" w={30}><path d="M6 1V21M11 1V21M16 1V21M1 6H21M1 11H21M1 16H21" /></S>
      <S name="Snap" w={30}><path d="M3 4H20M3 9H20M3 14H20M3 19H20" strokeDasharray="3 3.500" strokeWidth={2.500} /></S>
      <C w={20} name="Snap menu" />
    </StatusGroup>
    <StatusGroup>
      <S name="Ortho" w={30}><path d="M2 1V20H21M2 14H8V20" strokeWidth={1.500} /></S>
      <S name="Polar" w={30}><circle cx={9} cy={12} r={8} /><path d="M9 12H21M9 12L16 3" /></S>
      <C w={22} name="Polar menu" />
      <S name="Isodraft" w={28}><path d="M11 1V21" stroke={G} /><path d="M3 3L19 19" stroke="#c95c64" /><rect x={9.500} y={9.500} width={3} height={3} fill={PANEL} /></S>
      <C w={20} name="Isodraft menu" />
      <S name="Object tracking" w={29} on><path d="M16 3L2 20H21" strokeWidth={1.500} stroke="#fff" /><rect x={7} y={9} width={4} height={4} fill="#fff" stroke="none" /></S>
      <Tight />
      <S name="Object snap" w={28} on><path d="M8 4H20V20H4V8" strokeWidth={1.500} stroke="#fff" /><rect x={1.500} y={1.500} width={5} height={5} stroke="#fff" /></S>
      <C w={20} name="Snap modes" />
    </StatusGroup>
    <StatusGroup>
      <S name="Annotation visibility" w={29} on><path d="M9 1L11 10L18 19L12 17L9 21L7 17L1 19L7 10Z" fill="#fff" stroke="none" /><circle cx={17} cy={5} r={3.500} stroke="#fff" /></S>
      <S name="Auto scale" w={30}><g transform="translate(-2 0)"><Needle /></g><path d="M19 0L14 6H17L15 10L21 4H18Z" fill={W} stroke="none" /></S>
      <S name="Annotation scale" w={30}><Needle /></S>
      <ScaleBtn w={43} h={30}>1:1<Caret big /></ScaleBtn>
    </StatusGroup>
    <StatusGroup>
      <S name="Workspace" w={30}><circle cx={11} cy={11} r={5.500} strokeWidth={4.500} />{gear.map((a) => <path key={a} d="M11 4V1" strokeWidth={4} transform={`rotate(${a} 11 11)`} />)}</S>
      <C w={20} name="Workspace menu" />
    </StatusGroup>
    <StatusGroup><S name="Annotation monitor" w={30}><path d="M11 1V21M1 11H21" strokeWidth={2.500} /></S></StatusGroup>
    <StatusGroup><S name="Isolate objects" w={30}><rect x={2.500} y={1.500} width={7} height={7} /><circle cx={17} cy={10} r={4} /><path d="M9 13L13.500 20.500H4.500Z" /></S></StatusGroup>
    <StatusGroup>
      <S name="Graphics performance" w={34} iw={26}><rect x={0} y={-1} width={20} height={16} rx={2} fill="#2b69a8" stroke="none" /><path d="M5 -1V14M0 4H10M10 14L5 9" stroke={W} /><path d="M0 14H18V21H0Z" fill="#f7b733" stroke="none" /><path d="M11 16L16 21L25 12" stroke="#4caf50" strokeWidth={4} /></S>
      <S name="Drawing history" w={34} iw={24}><path d="M6 4A8 8 0 1 1 18 14" /><path d="M12 4V10H16" /><path d="M1 7H7L12 12V20H1Z" fill="#2b69a8" stroke={W} /><rect x={1} y={15} width={11} height={5} fill="#f7b733" stroke="none" /><circle cx={16} cy={17} r={5} fill="#4aa8f0" stroke="none" /><path d="M16 16V20M16 13.500V15" stroke="#fff" /></S>
    </StatusGroup>
    <StatusGroup>
      <S name="Full screen" w={30}><rect x={1.500} y={3.500} width={19} height={14} /><path d="M14 6H18V10ZM4 11V15H8Z" fill={W} stroke="none" /><path d="M13 11L16 8M6 13L9 11" /></S>
      <S name="Customization" w={30}><path d="M1 2.500H21M1 11H21M1 19.500H21" strokeWidth={2.500} /></S>
    </StatusGroup>
  </StatusBar>
);

const Balloon = styled.aside`
  position: absolute;
  right: 6px;
  bottom: 48px;
  width: 377px;
  height: 126px;
  padding: 13px 18px;
  border: 1px solid #000;
  border-radius: 20px;
  background: #ffffe1;
  color: #111;
`;
const BalloonHead = styled.div`
  display: flex;
  align-items: center;
  height: 20px;
  margin: 0 -7px 8px -6px;
`;
const BalloonTitle = styled.strong`
  flex: 1;
  padding-left: 15px;
`;
const BalloonClose = styled(Btn)`
  border: 1px solid #8a8f9c;
  background: #f1f1f4;
`;
const BalloonText = styled.p`
  margin: 0 -8px 8px 0;
`;
const BalloonLink = styled.a`
  color: #0000e6;
`;
const Tail = styled.svg`
  position: absolute;
  top: 124px;
  left: 265px;
`;

const HistoryBalloon = () => (
  <Balloon>
    <BalloonHead>
      <Svg width={18} height={18} viewBox="0 0 18 18"><circle cx={9} cy={9} r={8.500} fill="#1f4fc0" stroke="#8fa3c8" /><path d="M9 7.500V14M7 14H11M7.500 8H9" stroke="#fff" strokeWidth={2} /><circle cx={9} cy={4.500} r={1.500} fill="#fff" /></Svg>
      <BalloonTitle>View Drawing History</BalloonTitle>
      <BalloonClose w={20} h={20} aria-label="Close"><Svg width={12} height={12} viewBox="0 0 12 12"><path d="M1 1L11 11M11 1L1 11" stroke="#000" strokeWidth={2} /></Svg></BalloonClose>
    </BalloonHead>
    <BalloonText>You can view and compare previous versions in the Drawing History palette by signing into OneDrive.</BalloonText>
    <BalloonLink href="#onedrive">Sign in to OneDrive</BalloonLink>
    <Tail width={28} height={24} viewBox="0 0 28 24"><path d="M0 0L26 23L23 0" fill="#ffffe1" /><path d="M0 .5L26 23L23 .5" fill="none" stroke="#000" /></Tail>
  </Balloon>
);

export default function App() {
  return (
    <Window>
      <Global />
      <Title />
      <Tabs>
        {tabNames.map((t, i) => <Tab key={t} active={i === 0}>{t}</Tab>)}
        <TabTools h={25} aria-label="Minimize ribbon">
          <Ico w={19} h={9}><rect width={19} height={9} fill="#fff" stroke="none" /><path d="M6 7H13L9.500 3Z" fill="#555" stroke="none" /></Ico>
          <Caret />
        </TabTools>
      </Tabs>
      <Ribbon>
        <DrawPanel />
        <ModifyPanel />
        <AnnotationPanel />
        <LayersPanel />
        <BlockPanel />
        <PropertiesPanel />
        <GroupsPanel />
        <UtilitiesPanel />
        <ClipboardPanel />
        <ViewPanel />
      </Ribbon>
      <DocTabs>
        <Slash />
        <PlainTab>Start</PlainTab>
        <ActiveDoc>
          solidos*
          <Btn aria-label="Close solidos"><Ico w={10} h={10}><path d="M0 0L10 10M10 0L0 10" strokeWidth={2} stroke="#a9adb3" /></Ico></Btn>
        </ActiveDoc>
        <AddTab aria-label="New drawing"><Plus /></AddTab>
        <Slash />
      </DocTabs>
      <Strip />
      <Viewport>
        <Drawing />
        <ViewHead>
          <ViewLabel><span>[−]</span><span>[Custom View]</span><span>[X-Ray]</span></ViewLabel>
          <Btn aria-label="Viewport controls">
            <Ico w={66} h={24}>
              <path d="M2 16H15" strokeWidth={4} />
              <rect x={31} y={6} width={9} height={9} strokeWidth={1.500} /><rect x={28} y={9} width={8} height={8} fill="#212830" strokeWidth={2.500} />
              <path d="M53 6L63 17M63 6L53 17" strokeWidth={3} />
            </Ico>
          </Btn>
        </ViewHead>
        <ViewCube />
        <Navigation />
        <Dock>
          <History>
            <HistoryLine bg="#505356" fg="#b5b7b9">Command:</HistoryLine>
            <HistoryLine bg="#56595b" fg="#d5d6d7">Command:</HistoryLine>
            <HistoryLine bg="#5f6262" fg="#ffffff">Command:</HistoryLine>
          </History>
          <CommandBar>
            <CommandTools>
              <Ico w={6} h={24}><path d="M1 0V24M5 0V24" strokeDasharray="2 2" strokeWidth={2} stroke="#b5b7b9" /></Ico>
              <Btn aria-label="Close command line"><Ico w={12} h={12}><path d="M1 1L11 11M11 1L1 11" stroke="#b5b7b9" strokeWidth={2} /></Ico></Btn>
              <Wrench aria-label="Customize command line"><Ico><path d="M2 18L12 8" strokeWidth={3.500} strokeLinecap="round" stroke="#b5b7b9" /><path d="M15 0A5.500 5.500 0 1 0 20 5L16.500 7L13 4Z" fill="#b5b7b9" stroke="none" /></Ico></Wrench>
            </CommandTools>
            <CommandField>
              <Btn aria-label="Recent commands">
                <Ico w={20} h={16}><rect x={0.500} y={0.500} width={19} height={15} stroke="#666" /><path d="M0 2.500H20" stroke="#555" strokeWidth={4} /><path d="M2 6L5 8.500L2 11M6 11H11" stroke="#555" /></Ico>
              </Btn>
              <Caret big color="#555" />
              <CommandInput aria-label="Command" placeholder="Type a command" />
              <Caret big up color="#555" />
            </CommandField>
          </CommandBar>
        </Dock>
      </Viewport>
      <Strip />
      <LayoutTabs>
        <ModelTab>Model</ModelTab>
        <PlainTab>A3_1</PlainTab>
        <Slash />
        <AddLayout aria-label="New layout"><Plus /></AddLayout>
        <Slash />
      </LayoutTabs>
      <Status />
      <HistoryBalloon />
    </Window>
  );
}
